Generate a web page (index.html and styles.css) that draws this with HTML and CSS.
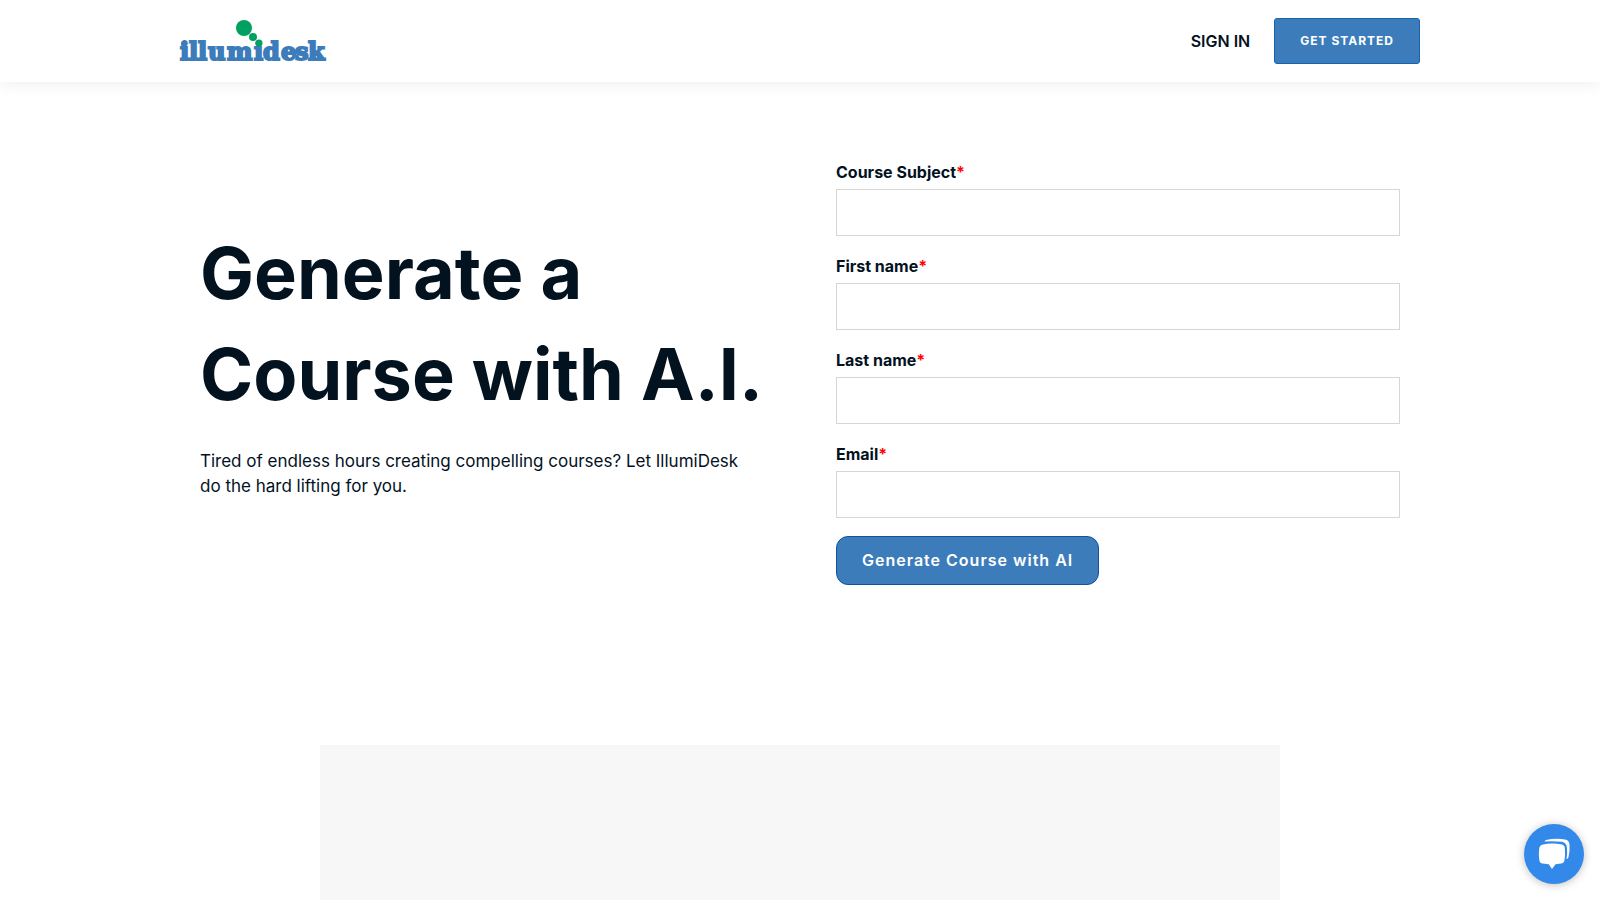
FILE: index.html
```html
<!DOCTYPE html>
<html lang="en">
<head>
<meta charset="utf-8">
<meta name="viewport" content="width=device-width, initial-scale=1">
<title>Generate a Course with A.I. | IllumiDesk</title>
<link rel="stylesheet" href="styles.css">
</head>
<body>
<header class="site-header">
  <div class="header-inner">
    <a class="logo" href="#" aria-label="illumidesk">
      <svg width="148" height="44" viewBox="0 0 148 44">
        <text class="logo-text" x="0 9 18 28 47 74 83 101 115 128" y="41">illumidesk</text>
        <circle class="logo-blue" cx="4" cy="25" r="3"/>
        <circle class="logo-green" cx="64" cy="9" r="8"/>
        <circle class="logo-green" cx="73" cy="18" r="4"/>
        <circle class="logo-green" cx="79" cy="24" r="3.500"/>
      </svg>
    </a>
    <nav class="nav">
      <a class="sign-in" href="#">SIGN IN</a>
      <a class="get-started" href="#">GET STARTED</a>
    </nav>
  </div>
</header>
<main>
  <section class="hero">
    <div class="intro">
      <h1>Generate a Course with A.I.</h1>
      <p>Tired of endless hours creating compelling courses? Let IllumiDesk do the hard lifting for you.</p>
    </div>
    <form class="course-form">
      <div class="field">
        <label for="subject">Course Subject<span class="required">*</span></label>
        <input id="subject" type="text" required>
      </div>
      <div class="field">
        <label for="first">First name<span class="required">*</span></label>
        <input id="first" type="text" required>
      </div>
      <div class="field">
        <label for="last">Last name<span class="required">*</span></label>
        <input id="last" type="text" required>
      </div>
      <div class="field">
        <label for="email">Email<span class="required">*</span></label>
        <input id="email" type="email" required>
      </div>
      <button class="submit" type="submit">Generate Course with AI</button>
    </form>
  </section>
  <div class="media"></div>
</main>
<button class="chat" type="button" aria-label="Open chat">
  <svg width="60" height="60" viewBox="0 0 60 60">
    <path fill="#fff" d="M22 16Q32 14 41 15.500Q45 16 45.500 20.500Q46 28 44.500 33Q44 35 42.500 35Q43.500 30 43 24Q42.500 18.500 38 17.800Q30 17 20.500 17.500Q20.500 16.500 22 16Z"/>
    <path fill="#fff" d="M19 20.500Q27.500 18.800 37 20.300Q40.500 20.800 40.800 24Q41.500 31 40.500 36Q40 39.300 37 39.600L31.500 40.200L28 45L24.800 40.200L18.500 39.600Q15.800 39.200 15.300 36Q14.300 30 15.300 24Q15.800 21 19 20.500Z"/>
  </svg>
</button>
</body>
</html>
```
FILE: styles.css
```css
* { box-sizing: border-box; }
body {
  display: flex;
  flex-direction: column;
  min-height: 100vh;
  margin: 0;
  font-family: Inter, "Liberation Sans", sans-serif;
  font-size: 17px;
  line-height: 25px;
  color: #03121f;
  background: #fff;
}
main {
  display: flex;
  flex-direction: column;
  flex: 1;
}
a { color: inherit; text-decoration: none; }

.site-header {
  background: #fff;
  box-shadow: 0 2px 15px rgba(0, 0, 0, 0.07);
}
.header-inner {
  display: flex;
  align-items: center;
  justify-content: space-between;
  max-width: 1240px;
  margin: 0 auto;
  padding: 18px 0;
}
.logo svg { display: block; overflow: visible; }
.logo-text {
  font-family: "DejaVu Serif", serif;
  font-size: 24px;
  font-weight: 700;
  fill: #3d7cba;
  stroke: #3d7cba;
  stroke-width: 2px;
}
.logo-blue { fill: #3d7cba; }
.logo-green { fill: #00a160; }
.nav { display: flex; align-items: center; gap: 24px; }
.sign-in { font-size: 16px; font-weight: 600; }
.get-started {
  padding: 10px 25px;
  border: 1px solid #1764ae;
  border-radius: 3px;
  background: #3d7cba;
  color: #fff;
  font-size: 12px;
  line-height: 24px;
  font-weight: 700;
  letter-spacing: 1px;
}

.hero {
  display: grid;
  grid-template-columns: 1fr 1fr;
  gap: 72px;
  align-items: center;
  width: 100%;
  max-width: 1240px;
  margin: 0 auto;
  padding: 78px 20px 160px;
}
h1 {
  margin: 0 0 25px;
  font-size: 72px;
  line-height: 101px;
  font-weight: 700;
}
p {
  margin: 0 0 25px;
  padding-right: 10px;
}
.field { margin-bottom: 18px; }
.field label {
  display: block;
  margin-bottom: 5px;
  font-size: 16px;
  line-height: 24px;
  font-weight: 700;
}
.required { color: #f00; }
.field input {
  display: block;
  width: 100%;
  height: 47px;
  padding: 10px 15px;
  border: 1px solid #d6d6d6;
  background: #fff;
  font: inherit;
}
.submit {
  display: block;
  padding: 11px 25px;
  border: 1px solid #0f549c;
  border-radius: 12px;
  background: #3d7cba;
  color: #fff;
  font-family: inherit;
  font-size: 16px;
  line-height: 25px;
  font-weight: 600;
  letter-spacing: 1px;
}
.media {
  flex: 1;
  width: 60%;
  margin: 0 auto;
  background: #f7f7f7;
}
.chat {
  position: fixed;
  right: 16px;
  bottom: 16px;
  width: 60px;
  height: 60px;
  padding: 0;
  border: 0;
  border-radius: 50%;
  background: #3289e9;
  box-shadow: 0 1px 8px rgba(0, 0, 0, 0.25);
}
.chat svg { display: block; }
```
